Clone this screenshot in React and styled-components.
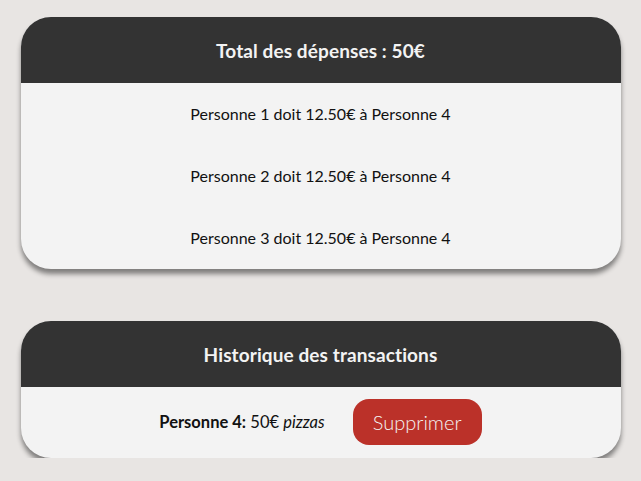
import React from 'react';
import styled, { createGlobalStyle } from 'styled-components';

const GlobalStyle = createGlobalStyle`
    body {
        margin: 0;
        background-color: #e8e5e3;
        font-family: Lato, "Open Sans", sans-serif;
        color: #111;
    }
`;

const Page = styled.div`
    display: flex;
    flex-direction: column;
    align-items: center;
    gap: 52px;
    padding-top: 17px;
`;

const Card = styled.section`
    width: 600px;
    border-radius: 30px;
    overflow: hidden;
    background-color: #f3f3f3;
    box-shadow: 0 5px 5px rgba(0, 0, 0, 0.45);
`;

const CardHeader = styled.h2`
    margin: 0;
    height: 66px;
    display: flex;
    align-items: center;
    justify-content: center;
    background-color: #333333;
    color: #f3f3f3;
    font-size: 19px;
    font-weight: 700;
    letter-spacing: 0.1px;
`;

const Row = styled.div`
    height: ${props => props.height || 62}px;
    padding-bottom: 2px;
    box-sizing: border-box;
    display: flex;
    align-items: center;
    justify-content: center;
    gap: 28px;
    font-size: 16px;
`;

const Amount = styled.span`
    font-size: 16.5px;
    em {
        font-style: italic;
    }
`;

const DeleteButton = styled.button`
    width: 129px;
    height: 46px;
    border: none;
    border-radius: 16px;
    background-color: #bb3129;
    color: #f3f3f3;
    font-family: inherit;
    font-size: 20px;
    font-weight: 300;
    cursor: pointer;
`;

const debts = [
    'Personne 1 doit 12.50€ à Personne 4',
    'Personne 2 doit 12.50€ à Personne 4',
    'Personne 3 doit 12.50€ à Personne 4',
];

export default function App() {
    return (
        <>
            <GlobalStyle />
            <Page>
                <Card>
                    <CardHeader>Total des dépenses : 50€</CardHeader>
                    {debts.map(d => (
                        <Row key={d}>{d}</Row>
                    ))}
                </Card>
                <Card>
                    <CardHeader>Historique des transactions</CardHeader>
                    <Row height={71}>
                        <Amount>
                            <strong>Personne 4:</strong> 50€ <em>pizzas</em>
                        </Amount>
                        <DeleteButton>Supprimer</DeleteButton>
                    </Row>
                </Card>
            </Page>
        </>
    );
}
